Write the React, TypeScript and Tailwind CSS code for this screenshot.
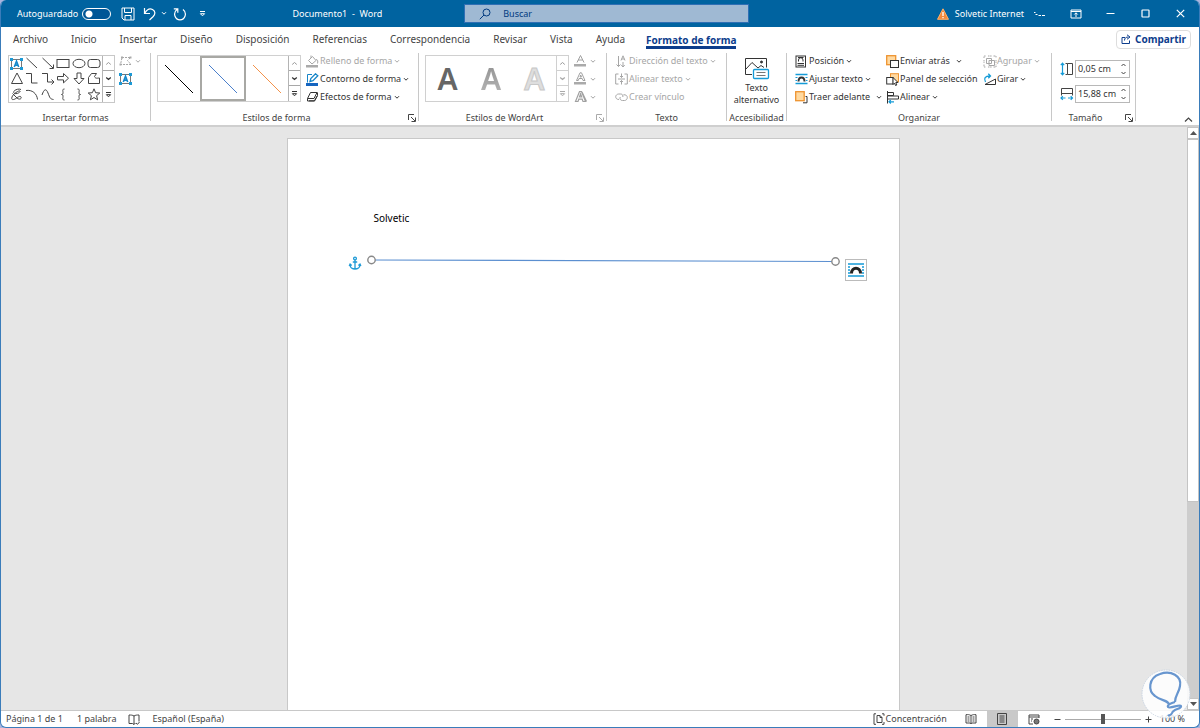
import React from "react";

type IconProps = { w: number; h: number; children: React.ReactNode; className?: string };

function Icon({ w, h, children, className = "" }: IconProps) {
  return (
    <svg
      width={w}
      height={h}
      viewBox={`0 0 ${w} ${h}`}
      fill="none"
      stroke="currentColor"
      strokeWidth={1}
      aria-hidden="true"
      className={`shrink-0 ${className}`}
    >
      {children}
    </svg>
  );
}

const Chevron = () => (
  <Icon w={6} h={5}>
    <path d="M1 1.2 3 3.2 5 1.2" />
  </Icon>
);

const Up = () => (
  <Icon w={7} h={5}>
    <path d="M1.2 3.5 3.5 1.5 5.8 3.5" />
  </Icon>
);

const Down = () => (
  <Icon w={7} h={5}>
    <path d="M1.2 1.5 3.5 3.5 5.8 1.5" strokeWidth={1.3} />
  </Icon>
);

const More = () => (
  <Icon w={7} h={7}>
    <path d="M1 1.5h5" />
    <path d="M1.4 3.7h4.2L3.5 5.8z" />
  </Icon>
);

const TextBoxIcon = () => (
  <Icon w={13} h={12}>
    <rect x="1.5" y="1.5" width="10" height="9" stroke="#777" />
    <g fill="#1c9ad6" stroke="none">
      <rect x="0" y="0" width="3" height="3" />
      <rect x="10" y="0" width="3" height="3" />
      <rect x="0" y="9" width="3" height="3" />
      <rect x="10" y="9" width="3" height="3" />
    </g>
    <path d="M4.3 9 6.5 3.2 8.7 9M5.100 7.1h2.8" stroke="#1488cc" strokeWidth={1.6} />
  </Icon>
);

const shapes: { name: string; art: React.ReactNode }[] = [
  { name: "Cuadro de texto", art: null },
  { name: "Línea", art: <path d="m1.5 1 10.5 10" /> },
  { name: "Flecha", art: <path d="m1.5 1 10.5 10M12.5 7.5v4h-4" /> },
  { name: "Rectángulo", art: <rect x="1" y="2.5" width="12" height="8" /> },
  { name: "Elipse", art: <ellipse cx="7" cy="6.5" rx="6" ry="4.2" /> },
  { name: "Rectángulo redondeado", art: <rect x="1" y="2.5" width="12" height="8" rx="2.5" /> },
  { name: "Triángulo", art: <path d="M7 1 12.5 11.5h-11z" /> },
  { name: "Conector angular", art: <path d="M1 1.5h5.5v9.500h6" /> },
  { name: "Conector de flecha", art: <path d="M1 1.5h5.5v8.5h6M10.5 7.5l2.5 2.5-2.5 2.5" /> },
  { name: "Flecha derecha", art: <path d="M1.5 4.500h6v-3l5 4.700-5 4.700v-3h-6z" /> },
  { name: "Flecha abajo", art: <path d="M5 1h4v5.500h3l-5 5.500-5-5.500h3z" /> },
  { name: "Forma libre", art: <path d="M4.500 1.500h5l-2 3c1 2.500 3 1.500 5 1.500v5.500h-11v-6z" /> },
  { name: "A mano alzada", art: <path d="M11 1.500C8 0 2 3 4 5s7-1 6-2-7 3-8 6 1 3 3 2 5-4 6-2-2 3-4 1L2.500 5.500" /> },
  { name: "Arco", art: <path d="M1 2.500c6-1 11 3 11.500 9" /> },
  { name: "Curva", art: <path d="M1 7c2-6 4-7 6-2s2 6 5.500 6.500" /> },
  { name: "Llave izquierda", art: <path d="M8.500 1C6 1 7 3 7 4.500S6.500 6.500 5.500 6.500c1 0 1.500.5 1.500 2S6 12 8.500 12" /> },
  { name: "Llave derecha", art: <path d="M5.500 1C8 1 7 3 7 4.500s.5 2 1.500 2c-1 0-1.500.5-1.500 2S8 12 5.500 12" /> },
  { name: "Estrella", art: <path d="m7 .8 1.600 3.900 4.200.3-3.200 2.700 1 4.100L7 9.500l-3.600 2.300 1-4.100L1.200 5l4.200-.3z" /> },
];

function GalleryScroll({ muted = false }: { muted?: boolean }) {
  return (
    <div
      className={
        muted
          ? "grid w-3 shrink-0 grid-rows-3 divide-y divide-[#d0d0d0] border-l border-[#d0d0d0] text-[#aaa]"
          : "grid w-3 shrink-0 grid-rows-3 divide-y divide-[#a8a8a8] border-l border-[#b4b4b4] text-[#333]"
      }
    >
      <button aria-label="Fila anterior" className="flex items-center justify-center text-[#999]"><Up /></button>
      <button aria-label="Fila siguiente" className="flex items-center justify-center"><Down /></button>
      <button aria-label="Más" className="flex items-center justify-center"><More /></button>
    </div>
  );
}

function Group({
  label,
  width,
  launcher,
  launcherMuted,
  children,
}: {
  label: string;
  width: string;
  launcher?: boolean;
  launcherMuted?: boolean;
  children: React.ReactNode;
}) {
  return (
    <section aria-label={label} className={`flex shrink-0 ${width}`}>
      <div className="flex min-w-0 flex-1 flex-col">
        <div className="flex h-[60px] items-start">{children}</div>
        <div className="flex h-3 items-center leading-3 whitespace-nowrap text-[#444]">
          <span className="flex-1 text-center">{label}</span>
          {launcher && (
            <button
              aria-label={`Opciones de ${label}`}
              className={`mr-0.5 ml-1.5 ${launcherMuted ? "text-[#aaa]" : "text-[#444]"}`}
            >
              <Icon w={8} h={8}>
                <path d="M.5 6V.5H6M3 3l4 4M7.500 3.500v4h-4" />
              </Icon>
            </button>
          )}
        </div>
      </div>
      <div className="mt-px h-[68px] w-px bg-[#c8c8c8]" />
    </section>
  );
}

function Command({
  icon,
  text,
  menu = true,
  wide = false,
  disabled = false,
}: {
  icon: React.ReactNode;
  text: string;
  menu?: boolean;
  wide?: boolean;
  disabled?: boolean;
}) {
  return (
    <button
      disabled={disabled}
      className={`flex h-[18px] items-center whitespace-nowrap ${disabled ? "text-[#a6a6a6]" : "text-[#333]"}`}
    >
      <span className="flex w-[14px] shrink-0 items-center">{icon}</span>
      <span>{text}</span>
      {menu && <span className={wide ? "ml-1.5" : "ml-0.5"}><Chevron /></span>}
    </button>
  );
}

const FillIcon = () => (
  <Icon w={13} h={13}>
    <path d="m2.500 5.500 4-4 3.500 4-4 3.500zM5 3V.5M10 4.500c2 0 2 2 1.500 4" />
    <rect x="0" y="10" width="12" height="2.500" fill="#aaa" stroke="none" />
  </Icon>
);
const OutlineIcon = () => (
  <Icon w={13} h={13}>
    <path d="M6 1.500H1.500v8" stroke="#1685c8" />
    <path d="m4 8.500.8-3L9.500.8l2.300 2L7 7.700z" fill="#fff" stroke="#1685c8" strokeWidth={1.3} />
    <rect x="0" y="10" width="12" height="3" fill="#1565c0" stroke="none" />
  </Icon>
);
const EffectsIcon = () => (
  <Icon w={13} h={12}>
    <path d="M4.500 1.500h6.500L8 7.500H1.500z" />
    <path d="M1.500 7.500v2.500h7l3-5.500v-3M3 9.800h5.500l2.800-5" />
  </Icon>
);
const LetterIcon = ({ kind }: { kind: "fill" | "outline" | "effect" }) => (
  <Icon w={14} h={14}>
    {kind === "effect" ? (
      <path d="M1.500 11.500 5.500 1.500h2l4 10H9l-.8-2.300H4.800L4 11.500zM5.500 7h2.200L6.600 3.800zM8 2l4.500 9.500" strokeWidth={1.2} />
    ) : (
      <>
        <path d={kind === "fill" ? "m3 8.500 3.500-7 3.500 7M4.200 6h4.600" : "M2.500 8.500 6 .8h1.500l3.500 7.700H9L8.200 6.500H5L4.300 8.500zM6 5h1.500L6.700 3z"} />
        <rect x="0" y="10" width="12" height="2.500" fill="#aaa" stroke="none" />
      </>
    )}
  </Icon>
);
const DirectionIcon = () => (
  <Icon w={13} h={13}>
    <path d="M3.500 1v10.500M1.500 9.500l2 2 2-2M6 5.500 8 .8l2 4.700M6.700 4h2.600M8 7v5M6.300 10 8 12l1.700-2" />
  </Icon>
);
const AlignTextIcon = () => (
  <Icon w={13} h={12}>
    <path d="M3.500 1H.7v10h2.800M9.500 1h2.800v10H9.500M3 6h7M6.500.5v4M6.500 7.500v4M5 3l1.500 1.500L8 3M5 9l1.500-1.500L8 9" />
  </Icon>
);
const LinkIcon = () => (
  <Icon w={13} h={10}>
    <path d="M4 7.500C1.500 7.500.7 6 .7 4.700S2 2 3.700 2h2C7.500 2 8.300 3.500 7.800 5M8.500 2.700c2.500 0 3.800 1 3.800 2.800S11 8.500 9.500 8.500h-2C5.500 8.500 4.500 7 5.200 5" />
  </Icon>
);
const AltTextIcon = () => (
  <Icon w={26} h={24}>
    <path d="M8 18.500H1.500v-16h21v9" />
    <path d="m2 13 6-6.500 6 5.500 3-2.500 3 2" />
    <circle cx="17.500" cy="6" r="1" fill="currentColor" />
    <rect x="9.500" y="13.500" width="15" height="9" rx="1" fill="#fff" stroke="#159bd7" strokeWidth={1.3} />
    <path d="M12.500 16.500h9M12.500 19.500h9" stroke="#777" />
  </Icon>
);
const PositionIcon = () => (
  <Icon w={12} h={13}>
    <rect x="1" y="1" width="9.500" height="11" />
    <path d="M3.500 6.500V5a2.200 2.200 0 0 1 4.500 0v1.500M3 2.500h5.500M2.500 8.500h6.500M2.500 10.300h6.500" />
  </Icon>
);
const WrapIcon = () => (
  <Icon w={13} h={12}>
    <path d="M.5 1.500h12M.5 10.500h12" stroke="#159bd7" strokeWidth={1.3} />
    <path d="M.5 4.500h2M.5 7.500h1.500M10.500 4.500h2M11 7.500h1.500" stroke="#159bd7" />
    <path d="M3.500 8.500C3.500 3 9.500 3 9.500 8.500" strokeWidth={2} />
  </Icon>
);
const ForwardIcon = () => (
  <Icon w={14} h={13}>
    <path d="M8 11.800h4V5.500H10.500" />
    <rect x=".7" y=".7" width="8.500" height="9" fill="#ffd9a0" stroke="#ee9330" strokeWidth={1.3} />
  </Icon>
);
const BackIcon = () => (
  <Icon w={14} h={13}>
    <rect x=".7" y=".7" width="9" height="9" fill="#ffd9a0" stroke="#ee9330" strokeWidth={1.3} />
    <rect x="4.500" y="5.500" width="8" height="7" fill="#fff" />
  </Icon>
);
const PaneIcon = () => (
  <Icon w={14} h={13}>
    <rect x="4.500" y=".7" width="8" height="8" fill="#ffd9a0" stroke="#ee9330" />
    <rect x=".7" y="4.500" width="6.500" height="6.500" fill="#fff" />
    <path d="m7 4.500 5 5H9.800l1 2.500-1.300.5-1-2.500L7 11.500z" fill="#fff" />
  </Icon>
);
const AlignIcon = () => (
  <Icon w={14} h={13}>
    <path d="M1.500 0v12.500M1.500 1.500h6v3h-6M1.500 5h11v3h-11" />
    <path d="M3 10.800h5M4.800 9 3 10.800l1.800 1.700" stroke="#159bd7" strokeWidth={1.2} />
  </Icon>
);
const GroupIcon = () => (
  <Icon w={14} h={13}>
    <path d="M3.500 3.500h5v5h-5zM6 5.500h5.500v5H6z" />
    <path d="M1 3V1h2M10.500 1H13v2M1 9.500V12h2M10.500 12H13V9.500M5 1h4M5 12h4M1 5v3M13 5v3" strokeDasharray="1.500 .6" />
  </Icon>
);
const RotateIcon = () => (
  <Icon w={14} h={13}>
    <path d="M2 11.500h10.500V6z" />
    <path d="M2.500 9C.5 5.500 2 3 7 3M5.300.7 7.500 3 5.300 5.300" stroke="#159bd7" strokeWidth={1.3} />
  </Icon>
);

const tabs = [
  "Archivo", "Inicio", "Insertar", "Diseño", "Disposición", "Referencias",
  "Correspondencia", "Revisar", "Vista", "Ayuda",
];

function TitleBar() {
  return (
    <header className="grid h-[27px] shrink-0 grid-cols-[464fr_285fr_451fr] items-center bg-[#0063a0] text-white">
      <div className="flex items-center pl-4">
        <label htmlFor="autosave" className="w-[65px]">Autoguardado</label>
        <input
          id="autosave"
          type="checkbox"
          role="switch"
          className="h-3 w-[29px] appearance-none rounded-full border border-white bg-[#005696] bg-[radial-gradient(circle_at_6px_5px,white_3px,transparent_4px)]"
        />
        <button aria-label="Guardar" className="ml-2.5">
          <Icon w={14} h={14}>
            <path d="M1 1h12v12H3L1 11zM3.500 1v4.500h7V1M4 13V8.500h6V13" />
          </Icon>
        </button>
        <button aria-label="Deshacer" className="ml-2 flex items-center gap-1">
          <Icon w={14} h={14}>
            <path d="M1.500 1v5.500H7M1.800 6.200C4 2.500 7 1.300 9.500 2.500c3 1.600 3 4.500.7 7L6.500 13" strokeWidth={1.2} />
          </Icon>
          <Chevron />
        </button>
        <button aria-label="Rehacer" className="ml-1.5">
          <Icon w={14} h={14}>
            <path d="M4 2.500C-.5 6 2 12.800 7 12.800S14.500 6 10 2.500M.8 1.800h4v4" strokeWidth={1.2} />
          </Icon>
        </button>
        <button aria-label="Personalizar" className="ml-3"><More /></button>
        <div className="flex-1 pr-[82px] text-right whitespace-pre">Documento1  -  Word</div>
      </div>
      <div className="flex h-[19px] items-center gap-3 border border-[#2f6fb4] bg-[#9fb9d3] pl-3.5 text-[#003a80]">
        <Icon w={12} h={12}>
          <circle cx="7.500" cy="4.500" r="3.500" />
          <path d="M5 7 .8 11.200" />
        </Icon>
        <input
          aria-label="Buscar"
          placeholder="Buscar"
          className="min-w-0 flex-1 bg-transparent outline-none placeholder:text-[#003a80]"
        />
      </div>
      <div className="flex items-center justify-end pr-3.5">
        <Icon w={12} h={12}>
          <path d="M6 .8 11.500 11.300H.5z" fill="#f08a3c" stroke="#ffb066" />
          <path d="M6 4v4M6 9v1.300" stroke="#fff" strokeWidth={1.3} />
        </Icon>
        <span className="ml-1.5">Solvetic Internet</span>
        <Icon w={14} h={10} className="ml-2">
          <path d="M2 3.500h1.500M3.500 5.500h2M6.500 6.500H9M10 6.500h3" />
        </Icon>
        <button aria-label="Opciones de presentación" className="ml-6">
          <Icon w={12} h={10}>
            <path d="M1 1h10v8H1zM1 2.500h10M6 8V4M4.300 5.500 6 3.800l1.700 1.700" />
          </Icon>
        </button>
        <button aria-label="Minimizar" className="ml-6"><Icon w={9} h={9}><path d="M.5 4.500h8" /></Icon></button>
        <button aria-label="Maximizar" className="ml-[26px]"><Icon w={9} h={9}><rect x="1" y="1" width="7" height="7" rx=".5" strokeWidth={1.2} /></Icon></button>
        <button aria-label="Cerrar" className="ml-[26px]"><Icon w={9} h={9}><path d="m.8.8 7.400 7.400M8.200.8.8 8.200" strokeWidth={1.2} /></Icon></button>
      </div>
    </header>
  );
}

function TabRow() {
  return (
    <nav className="flex h-6 shrink-0 items-center pr-2 pl-3 text-[10px] text-[#444]">
      <div className="flex flex-1 items-center gap-[23px]">
        {tabs.map((t) => (
          <button key={t}>{t}</button>
        ))}
        <button className="-ml-0.5 mt-1 border-b-[3px] border-[#0d3d8c] font-bold text-[#0d3d8c]">Formato de forma</button>
      </div>
      <button className="flex h-[19px] items-center gap-1 rounded-sm border border-[#ddd] px-1 font-bold text-[#0d3d8c]">
        <Icon w={10} h={10}>
          <path d="M4 3.500H1v6h7.500V6.500M3.500 6.500c0-2.500 1.500-3.500 4-3.500M6 .8 9 3 6 5.300" />
        </Icon>
        Compartir
      </button>
    </nav>
  );
}

function SizeField({ id, label, value, icon }: { id: string; label: string; value: string; icon: React.ReactNode }) {
  return (
    <div className="flex h-[19px] items-center">
      <label htmlFor={id} aria-label={label} className="w-[15px]">{icon}</label>
      <div className="flex h-[18px] w-[55px] items-center border border-[#b8b8b8] px-0.5">
        <input id={id} defaultValue={value} className="w-0 min-w-0 flex-1 bg-transparent text-[#333] outline-none" />
        <div className="flex flex-col gap-1">
          <button aria-label={`Aumentar ${label}`}><Icon w={7} h={4}><path d="M1.500 3 3.500 1l2 2" /></Icon></button>
          <button aria-label={`Reducir ${label}`}><Icon w={7} h={4}><path d="m1.500 1 2 2 2-2" /></Icon></button>
        </div>
      </div>
    </div>
  );
}

function Ribbon() {
  return (
    <div className="flex h-[74px] shrink-0 pt-px">
      <Group label="Insertar formas" width="w-[150px]">
        <div className="mt-[3px] ml-[7px] flex h-12 w-[107px] border border-[#c8c8c8]">
          <div className="grid flex-1 grid-cols-6 grid-rows-3">
            {shapes.map((s) => (
              <button key={s.name} aria-label={s.name} className="flex items-center justify-center text-[#444]">
                {s.art ? <Icon w={14} h={13}>{s.art}</Icon> : <TextBoxIcon />}
              </button>
            ))}
          </div>
          <GalleryScroll />
        </div>
        <div className="ml-1">
          <button aria-label="Editar forma" disabled className="flex h-[18px] items-center gap-0.5 text-[#a6a6a6]">
            <Icon w={14} h={12}>
              <path d="M3 2.500h8.500L8.500 5.500l3.500 4H1.500z" strokeDasharray="2 1" />
              <path d="M2 1.500h2v2H2zM10.500 1.500h2v2h-2zM.5 8.500h2v2h-2z" fill="#aaa" stroke="none" />
            </Icon>
            <Chevron />
          </button>
          <button aria-label="Dibujar cuadro de texto" className="flex h-[18px] items-center"><TextBoxIcon /></button>
        </div>
      </Group>
      <Group label="Estilos de forma" width="w-[268px]" launcher>
        <div className="mt-[3px] ml-1.5 flex h-[47px] w-36 border border-[#d0d0d0]">
          <button aria-label="Línea negra" className="flex flex-1 items-center justify-center text-black"><Icon w={32} h={32}><path d="m2 2 28 28" /></Icon></button>
          <button aria-label="Línea azul" className="flex flex-1 items-center justify-center border-2 border-[#a8a8a4] text-[#4a7fcb]"><Icon w={32} h={32}><path d="m2 2 28 28" /></Icon></button>
          <button aria-label="Línea naranja" className="flex flex-1 items-center justify-center text-[#f3924a]"><Icon w={32} h={32}><path d="m2 2 28 28" /></Icon></button>
          <GalleryScroll />
        </div>
        <div className="ml-[5px]">
          <Command icon={<FillIcon />} text="Relleno de forma" disabled />
          <Command icon={<OutlineIcon />} text="Contorno de forma" />
          <Command icon={<EffectsIcon />} text="Efectos de forma" />
        </div>
      </Group>
      <Group label="Estilos de WordArt" width="w-[188px]" launcher launcherMuted>
        <div className="mt-[3px] ml-1.5 flex h-[47px] w-36 border border-[#d0d0d0] text-[30px] leading-none font-semibold">
          <button aria-label="Relleno gris oscuro" className="flex flex-1 items-center justify-center text-[#666]">A</button>
          <button aria-label="Relleno gris con reflejo" className="flex flex-1 items-center justify-center bg-linear-to-b from-[#8a8a8a] to-[#bdbdbd] bg-clip-text text-transparent">A</button>
          <button aria-label="Relleno claro con contorno" className="flex flex-1 items-center justify-center text-[#dedede] [-webkit-text-stroke:1px_#c8c8c8]">A</button>
          <GalleryScroll muted />
        </div>
        <div className="ml-[5px] text-[#a0a0a0]">
          {(["fill", "outline", "effect"] as const).map((k) => (
            <button key={k} disabled aria-label={`Texto ${k}`} className="flex h-[18px] items-center gap-0.5">
              <LetterIcon kind={k} />
              <Chevron />
            </button>
          ))}
        </div>
      </Group>
      <Group label="Texto" width="w-[120px]">
        <div className="ml-2">
          <Command icon={<DirectionIcon />} text="Dirección del texto" disabled />
          <Command icon={<AlignTextIcon />} text="Alinear texto" disabled />
          <Command icon={<LinkIcon />} text="Crear vínculo" menu={false} disabled />
        </div>
      </Group>
      <Group label="Accesibilidad" width="w-[60px]">
        <button className="flex flex-1 flex-col items-center pt-1 leading-3 text-[#333]">
          <AltTextIcon />
          <span className="mt-0.5">Texto<br />alternativo</span>
        </button>
      </Group>
      <Group label="Organizar" width="w-[265px]">
        <div className="ml-2 w-[91px]">
          <Command icon={<PositionIcon />} text="Posición" />
          <Command icon={<WrapIcon />} text="Ajustar texto" />
          <Command icon={<ForwardIcon />} text="Traer adelante" wide />
        </div>
        <div className="w-[97px]">
          <Command icon={<BackIcon />} text="Enviar atrás" wide />
          <Command icon={<PaneIcon />} text="Panel de selección" menu={false} />
          <Command icon={<AlignIcon />} text="Alinear" />
        </div>
        <div>
          <Command icon={<GroupIcon />} text="Agrupar" disabled />
          <Command icon={<RotateIcon />} text="Girar" />
        </div>
      </Group>
      <Group label="Tamaño" width="w-[84px]" launcher>
        <div className="flex flex-col gap-1.5 pt-[7px] pl-2 text-[#444]">
          <SizeField
            id="shape-height"
            label="alto"
            value="0,05 cm"
            icon={
              <Icon w={14} h={14}>
                <path d="M2.500 1.500v11M.8 3.200l1.700-2 1.700 2M.8 10.800l1.700 2 1.700-2" stroke="#159bd7" strokeWidth={1.2} />
                <path d="M7.500 1.500h5v11h-5zM5.500 1.500h2M5.500 12.500h2" />
              </Icon>
            }
          />
          <SizeField
            id="shape-width"
            label="ancho"
            value="15,88 cm"
            icon={
              <Icon w={14} h={14}>
                <path d="M1.500 1.500h11v5h-11zM1.500 6v2.500M12.500 6v2.500" />
                <path d="M1 11h4.500M8 11h4.500M2.800 9.200 1 11l1.800 1.800M10.700 9.200l1.800 1.800-1.800 1.800" stroke="#159bd7" strokeWidth={1.2} />
              </Icon>
            }
          />
        </div>
      </Group>
      <div className="flex flex-1 items-end justify-end pr-1.5 pb-0.5 text-[#444]">
        <button aria-label="Contraer la cinta"><Icon w={9} h={6}><path d="m1 4.500 3.500-3.500L8 4.500" strokeWidth={1.2} /></Icon></button>
      </div>
    </div>
  );
}

function Workspace() {
  return (
    <main className="flex flex-1 border-t-2 border-[#cfcfcf] bg-[#e6e6e6]">
      <div className="flex flex-1 justify-center pt-[11px] pr-0.5">
        <article className="relative w-[613px] border border-b-0 border-[#c8c8c8] bg-white pt-[72px] pl-[86px] text-[10px] leading-[14px] text-black">
          <p>Solvetic</p>
          <svg className="absolute top-[114px] left-[60px]" width="496" height="20" viewBox="0 0 496 20" fill="none" aria-label="Línea con ancla">
            <path d="M23.500 7 487 8.500" stroke="#5b8fd0" strokeWidth="1.200" />
            <circle cx="23.500" cy="7" r="3.700" fill="#fff" stroke="#888" strokeWidth="1.400" />
            <circle cx="487.500" cy="8.500" r="3.700" fill="#fff" stroke="#888" strokeWidth="1.400" />
            <g stroke="#1e9ad6" strokeWidth="1.300">
              <circle cx="7" cy="5.500" r="1.400" />
              <path d="M7 7V16M4.800 9h4.400M2 11.500c0 6 10 6 10 0M1.200 13l.9-2 1.600 1.500M10.400 12.500l1.600-1.500.9 2" />
            </g>
          </svg>
          <button aria-label="Opciones de diseño" className="absolute top-[120px] left-[557px] flex size-[22px] items-center justify-center border border-[#bbb] bg-white">
            <Icon w={18} h={16}>
              <path d="M1 2h16M1 14h16" stroke="#159bd7" strokeWidth={1.4} />
              <path d="M1 5h2M1 8h2M1 11h2M15 5h2M15 8h2M15 11h2" stroke="#159bd7" strokeWidth={1.3} />
              <path d="M4.500 11.500c0-7 9-7 9 0" stroke="#222" strokeWidth={3} />
            </Icon>
          </button>
        </article>
      </div>
      <div className="flex w-3 shrink-0 flex-col bg-[#cdcdcd]">
        <button aria-label="Desplazar arriba" className="flex h-3 items-center justify-center border border-[#c4c4c4] bg-white text-[#555]">
          <Icon w={7} h={4}><path d="M0 4 3.500 0 7 4z" fill="currentColor" stroke="none" /></Icon>
        </button>
        <div className="flex flex-1 flex-col">
          <div className="h-[65%] border border-[#c4c4c4] bg-white" />
        </div>
        <button aria-label="Desplazar abajo" className="flex h-3 items-center justify-center border border-[#c4c4c4] bg-white text-[#555]">
          <Icon w={7} h={4}><path d="M0 0h7L3.500 4z" fill="currentColor" stroke="none" /></Icon>
        </button>
      </div>
    </main>
  );
}

function StatusBar() {
  return (
    <footer className="flex h-[17px] shrink-0 items-center border-t border-[#c8c8c8] pr-3.5 pl-[5px] text-[#444]">
      <span>Página 1 de 1</span>
      <span className="ml-3.5">1 palabra</span>
      <button aria-label="Revisión" className="ml-3">
        <Icon w={12} h={11}><path d="M6 2v8.500M6 2C4.500 1 3 1 1 1v8.500h3.500L6 10.500 7.500 9M6 2c1.500-1 3-1 5-1v6.500M8 9l1.500 1.300L11.500 8" /></Icon>
      </button>
      <span className="ml-3">Español (España)</span>
      <div className="flex-1" />
      <button className="flex items-center gap-px">
        <Icon w={12} h={12}><path d="M3 .8H1v10.500h2M9 .8h2v2M11 9v2.300H9M4 2.500h3l2 2v5H4zM7 2.500v2h2" /></Icon>
        Concentración
      </button>
      <button aria-label="Modo de lectura" className="ml-[18px]">
        <Icon w={12} h={10}><path d="M6 1.500v8M6 1.500C4 .5 3 .5 1 .7V9h4l1 .7L7 9h4V.7C9 .5 8 .5 6 1.500M2.500 3h2M2.500 5h2M2.500 7h2M7.500 3h2M7.500 5h2M7.500 7h2" /></Icon>
      </button>
      <button aria-label="Diseño de impresión" className="ml-2.5 flex h-4 w-[31px] items-center justify-center bg-[#c9c9c9]">
        <Icon w={10} h={12}><path d="M.5.5h9v11h-9zM2.500 3h5M2.500 5h5M2.500 7h5M2.500 9h5" /></Icon>
      </button>
      <button aria-label="Diseño web" className="ml-2.5">
        <Icon w={12} h={11}><path d="M5 10H1V1h10v3M1 3h10M3 5h2M3 7h1" /><circle cx="8.500" cy="7.500" r="2.500" fill="#777" /></Icon>
      </button>
      <button aria-label="Alejar" className="ml-3.5"><Icon w={7} h={7}><path d="M.5 3.500h6" /></Icon></button>
      <input
        aria-label="Zoom"
        type="range"
        defaultValue={50}
        className="mx-1 h-3 w-[76px] appearance-none bg-[linear-gradient(#aaa,#aaa)] bg-[length:100%_1px] bg-center bg-no-repeat [&::-webkit-slider-thumb]:h-2.5 [&::-webkit-slider-thumb]:w-1 [&::-webkit-slider-thumb]:appearance-none [&::-webkit-slider-thumb]:bg-[#555]"
      />
      <button aria-label="Acercar"><Icon w={7} h={7}><path d="M.5 3.500h6M3.500.5v6" /></Icon></button>
      <span className="ml-2">100 %</span>
    </footer>
  );
}

export default function App() {
  return (
    <div className="bg-[#a9b4de]">
      <div className="relative flex min-h-screen flex-col overflow-hidden rounded-md border-x border-b border-[#3a7cba] bg-white font-['Noto_Sans','Open_Sans',sans-serif] text-[9px] leading-3">
        <TitleBar />
        <TabRow />
        <Ribbon />
        <Workspace />
        <StatusBar />
        <div className="pointer-events-none absolute right-2 bottom-2 size-[50px]">
          <svg width="50" height="50" viewBox="0 0 50 50" fill="none" aria-hidden="true">
            <circle cx="25" cy="25" r="24" fill="#fff" fillOpacity=".85" stroke="#c9d4e2" strokeDasharray="1.5 1" />
            <path d="M28 36C28 31 20 32 14 27 7 22 7 9 19 5c11-4 22 2 20 12-1 7-5 9-5 16M34 33c-4 1-8 3-7 5 2 2 12-3 13-1 1 3-8 3-9 7-1 3-3 2-4 3" stroke="#6896cf" strokeWidth="2.2" />
          </svg>
        </div>
      </div>
    </div>
  );
}
